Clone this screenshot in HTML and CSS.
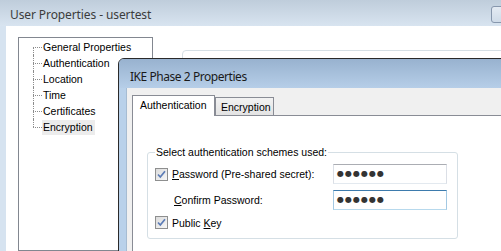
FILE: index.html
```html
<!DOCTYPE html>
<html lang="en">
<head>
    <meta charset="UTF-8">
    <meta name="viewport" content="width=device-width, initial-scale=1.0">
    <title>User Properties - usertest</title>
    <link rel="stylesheet" href="styles.css">
</head>
<body>

<div class="window">
    <div class="titlebar">
        <span class="title">User Properties - usertest</span>
        <span class="title-button"></span>
    </div>
    <div class="client">
        <ul class="tree">
            <li><span>General Properties</span></li>
            <li><span>Authentication</span></li>
            <li><span>Location</span></li>
            <li><span>Time</span></li>
            <li><span>Certificates</span></li>
            <li class="selected"><span>Encryption</span></li>
        </ul>
        <div class="page-panel"></div>
    </div>
</div>

<div class="dialog">
    <div class="dialog-title">IKE Phase 2 Properties</div>
    <div class="dialog-body">
        <div class="tabs">
            <div class="tab active">Authentication</div>
            <div class="tab">Encryption</div>
        </div>
        <div class="tab-panel">
            <fieldset class="group">
                <legend>Select authentication schemes used:</legend>

                <div class="row">
                    <span class="checkbox">
                        <svg width="11" height="11" viewBox="0 0 11 11"><path d="M2 5.5 L4.3 8 L9 2.2" fill="none" stroke="#5c7cb6" stroke-width="1.7"/></svg>
                    </span>
                    <span class="label"><u>P</u>assword (Pre-shared secret):</span>
                    <span class="textbox">●●●●●●</span>
                </div>

                <div class="row">
                    <span class="label indent"><u>C</u>onfirm Password:</span>
                    <span class="textbox focused">●●●●●●</span>
                </div>

                <div class="row short">
                    <span class="checkbox">
                        <svg width="11" height="11" viewBox="0 0 11 11"><path d="M2 5.5 L4.3 8 L9 2.2" fill="none" stroke="#5c7cb6" stroke-width="1.7"/></svg>
                    </span>
                    <span class="label">Public <u>K</u>ey</span>
                </div>
            </fieldset>
        </div>
    </div>
</div>

</body>
</html>
```

FILE: styles.css
```css
body {
    margin: 0;
    width: 501px;
    height: 251px;
    overflow: hidden;
    position: relative;
    background: white;
    font-family: "Liberation Sans", Arial, sans-serif;
    font-size: 10.5px;
    color: #000;
}

/* outer window */

.window {
    display: flex;
    flex-direction: column;
    height: 251px;
}

.titlebar {
    height: 26px;
    flex-shrink: 0;
    display: flex;
    background: linear-gradient(#bfcddb, #d8e4f0);
    padding-left: 10px;
}

.title {
    font-family: "Noto Sans", sans-serif;
    font-size: 12px;
    line-height: 16px;
    padding-top: 7px;
    letter-spacing: -0.1px;
    color: #3c3c3c;
}

.title-button {
    margin-left: auto;
    margin-top: 6px;
    margin-right: -12px;
    width: 20px;
    height: 15px;
    border: 1px solid #8797ad;
    border-radius: 3px;
    background: linear-gradient(#e4ebf3, #cfdbe8);
}

.client {
    flex: 1;
    display: flex;
    border-left: 6px solid #d6e3f0;
    padding: 11px 0 0 12px;
}

.tree {
    list-style: none;
    margin: 0;
    padding: 1px 0 0 0;
    width: 135px;
    box-sizing: border-box;
    border: 1px solid #828790;
    flex-shrink: 0;
}

.tree li {
    position: relative;
    height: 16px;
    line-height: 16px;
    margin-left: 14px;
    padding-left: 10px;
}

.tree li::before {
    content: "";
    position: absolute;
    left: 0;
    top: 8px;
    width: 9px;
    border-top: 1px dotted #8c8c8c;
}

.tree li::after {
    content: "";
    position: absolute;
    left: 0;
    top: 0;
    bottom: 0;
    border-left: 1px dotted #8c8c8c;
}

.tree li:first-child::after {
    top: 8px;
}

.tree li:last-child::after {
    bottom: 8px;
}

.tree .selected span {
    background: #ececec;
    padding: 1px 2px 2px 1px;
    margin-left: -1px;
}

.page-panel {
    flex: 1;
    margin: 13px -10px 0 29px;
    border: 1px solid #d5dfe5;
    border-radius: 4px;
    background: white;
}

/* IKE dialog on top */

.dialog {
    position: absolute;
    left: 118px;
    top: 58px;
    width: 420px;
    height: 220px;
    border: 1px solid #2a2a2a;
    border-radius: 6px 6px 0 0;
    background: #b9d1ea;
    display: flex;
    flex-direction: column;
}

.dialog-title {
    height: 29px;
    box-sizing: border-box;
    flex-shrink: 0;
    padding: 10px 0 0 11px;
    line-height: 16px;
    background: linear-gradient(#98b2cf, #b6cee8);
    border-radius: 5px 5px 0 0;
    font-family: "Noto Sans", sans-serif;
    font-size: 12px;
    letter-spacing: -0.45px;
    color: #1a1a1a;
}

.dialog-body {
    flex: 1;
    display: flex;
    flex-direction: column;
    margin-left: 7px;
    border-left: 1px solid #a6bcd2;
    background: #f0f0f0;
    padding: 7px 0 0 5px;
}

.tabs {
    display: flex;
    align-items: flex-end;
    height: 20px;
}

.tab {
    height: 18px;
    line-height: 18px;
    box-sizing: border-box;
    border: 1px solid #898c95;
    border-bottom: none;
    padding: 0 5px;
    background: linear-gradient(#f2f2f2, #e3e3e3);
    width: 59px;
}

.tab.active {
    position: relative;
    z-index: 1;
    height: 21px;
    line-height: 19px;
    margin-bottom: -1px;
    width: 83px;
    padding: 0 7px;
    background: white;
}

.tab-panel {
    flex: 1;
    background: white;
    border-top: 1px solid #898c95;
    border-left: 1px solid #898c95;
    padding: 30px 0 0 14px;
}

.group {
    width: 311px;
    height: 93px;
    box-sizing: border-box;
    margin: 0;
    padding: 5px 10px 0 7px;
    border: 1px solid #d5dfe5;
    border-radius: 3px;
}

.group legend {
    padding: 0 1px;
    margin-left: 0;
    line-height: 13px;
}

.row {
    display: flex;
    align-items: center;
    height: 20px;
    margin-bottom: 6px;
}

.row.short {
    height: 13px;
}

.checkbox {
    width: 13px;
    height: 13px;
    box-sizing: border-box;
    border: 1px solid #8e8f8f;
    background: linear-gradient(135deg, #dcdcdc, #f7f7f7);
    margin-right: 4px;
    flex-shrink: 0;
}

.checkbox svg {
    display: block;
}

.label.indent {
    padding-left: 19px;
}

.textbox {
    margin-left: auto;
    width: 114px;
    height: 20px;
    box-sizing: border-box;
    border: 1px solid;
    border-color: #abadb3 #dbdfe6 #e3e9ef #dbdfe6;
    padding-left: 3px;
    font-family: "DejaVu Sans", sans-serif;
    font-size: 8px;
    line-height: 18px;
    letter-spacing: 1px;
    color: #333;
}

.textbox.focused {
    border-color: #3d7bad #a4c9e3 #b7d9ed #a4c9e3;
}
```
